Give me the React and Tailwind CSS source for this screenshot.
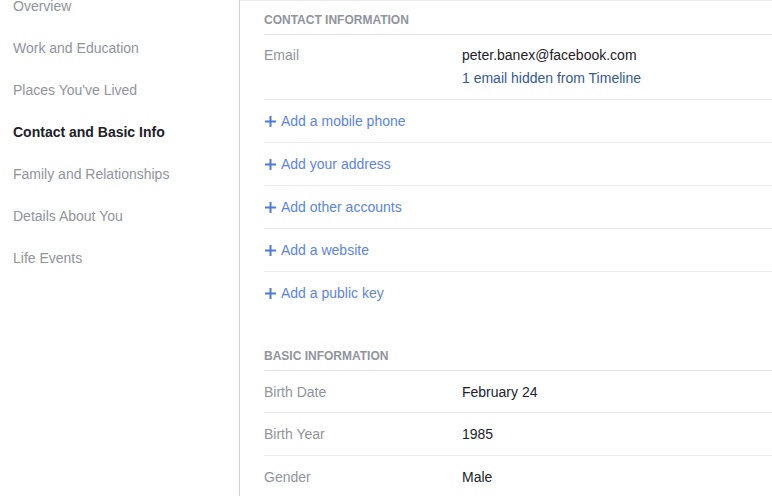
import React from 'react';

const nav = [
    { label: 'Overview' },
    { label: 'Work and Education' },
    { label: "Places You've Lived" },
    { label: 'Contact and Basic Info', active: true },
    { label: 'Family and Relationships' },
    { label: 'Details About You' },
    { label: 'Life Events' },
];

const addLinks = ['Add a mobile phone', 'Add your address', 'Add other accounts', 'Add a website', 'Add a public key'];

const basic = [
    ['Birth Date', 'February 24', 'h-[42px]'],
    ['Birth Year', '1985', 'h-[43px]'],
    ['Gender', 'Male', 'h-[43px]'],
];

function Plus() {
    return (
        <svg width="11" height="11" viewBox="0 0 11 11" className="shrink-0">
            <rect x="4.5" y="0" width="2" height="11" fill="#4a7be0" />
            <rect x="0" y="4.5" width="11" height="2" fill="#4a7be0" />
        </svg>
    );
}

function SectionHeader({ children }) {
    return (
        <div className="h-[34px] flex items-end pb-[6px] border-b border-[#dddfe2] text-[12px] leading-[16px] font-bold text-[#90949c] uppercase">
            {children}
        </div>
    );
}

export default function App() {
    return (
        <div className="w-[772px] h-[496px] overflow-hidden flex bg-white text-[14px] leading-[18px]" style={{ fontFamily: '"Liberation Sans", Arial, sans-serif' }}>
            {/* sidebar */}
            <div className="w-[240px] shrink-0 border-r border-[#cfd1d5]">
                <div className="-mt-[15px] pl-[13px]">
                    {nav.map(item => (
                        <div key={item.label} className={`h-[42px] flex items-center ${item.active ? 'font-bold text-[#1d2129]' : 'text-[#90949c]'}`}>
                            {item.label}
                        </div>
                    ))}
                </div>
            </div>

            {/* content */}
            <div className="flex-1 border-t border-[#e9ebee] pl-[24px]">
                <SectionHeader>Contact Information</SectionHeader>

                <div className="flex pt-[11px] pb-[12px] border-b border-[#e9ebee]">
                    <div className="w-[198px] text-[#90949c]">Email</div>
                    <div>
                        <div className="text-[#1d2129]">peter.banex@facebook.com</div>
                        <div className="mt-[5px] text-[#365899]">1 email hidden from Timeline</div>
                    </div>
                </div>

                {addLinks.map((l, i) => (
                    <div key={l} className={`flex items-center gap-[5px] pl-[1px] ${i < addLinks.length - 1 ? 'h-[43px] border-b border-[#e9ebee]' : 'h-[42px]'}`}>
                        <Plus />
                        <span className="text-[#5d84e0]">{l}</span>
                    </div>
                ))}

                <div className="mt-[23px]">
                    <SectionHeader>Basic Information</SectionHeader>
                    {basic.map(([k, v, h]) => (
                        <div key={k} className={`${h} flex items-center border-b border-[#e9ebee]`}>
                            <div className="w-[198px] text-[#90949c]">{k}</div>
                            <div className="text-[#1d2129]">{v}</div>
                        </div>
                    ))}
                </div>
            </div>
        </div>
    );
}
